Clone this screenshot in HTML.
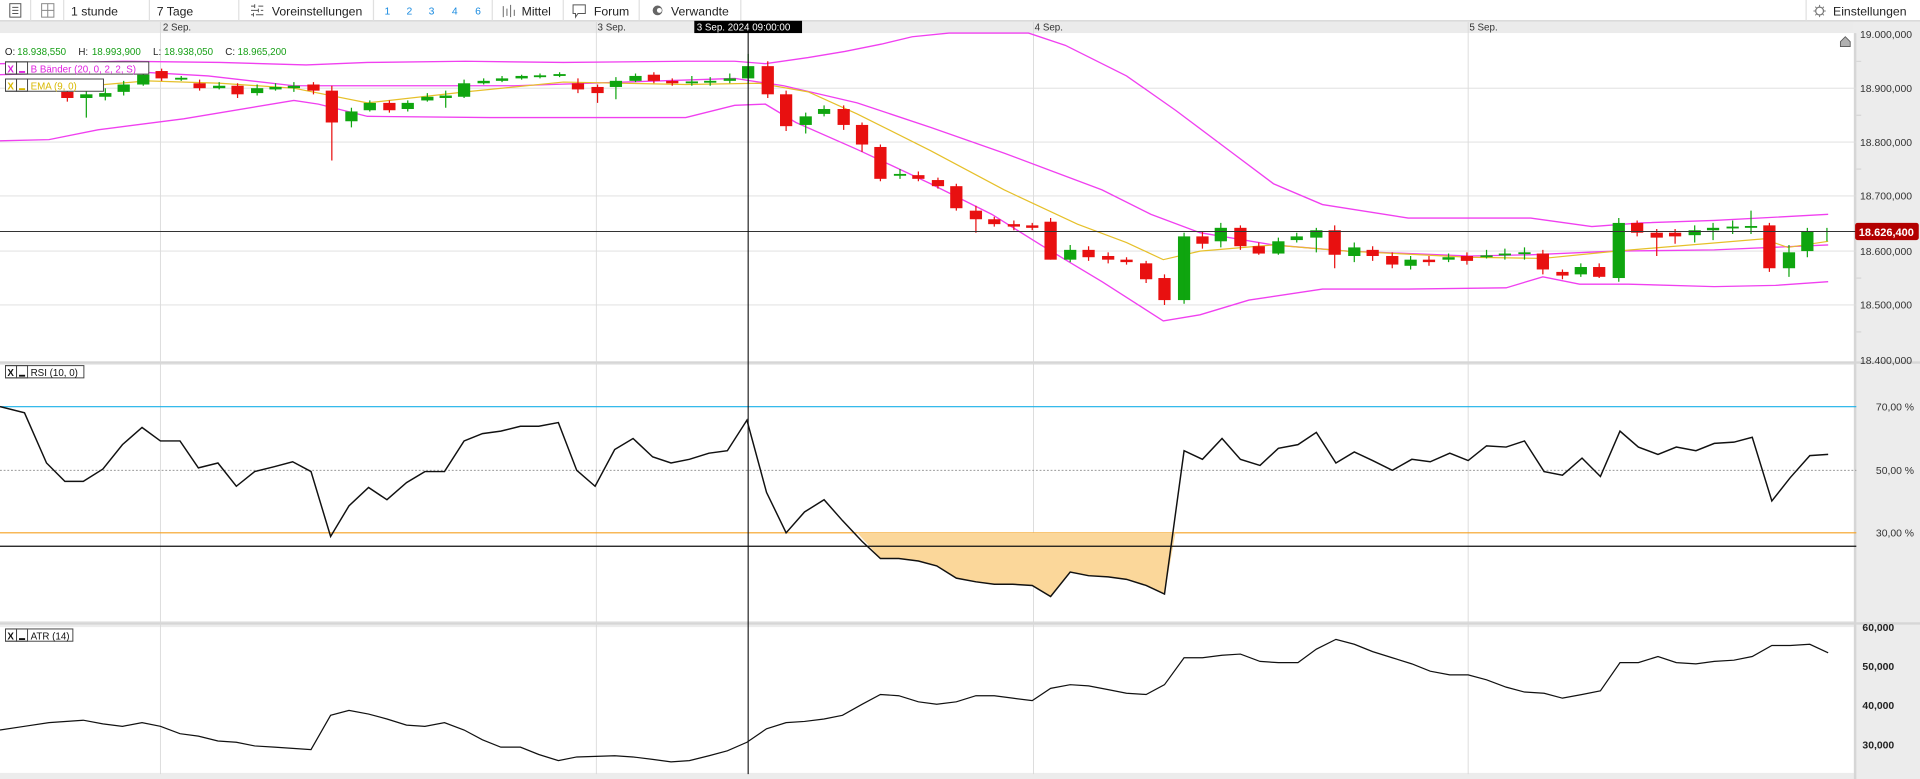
<!DOCTYPE html>
<html><head><meta charset="utf-8"><style>
html,body{margin:0;padding:0;background:#fff;}
svg{display:block}
text{font-family:"Liberation Sans",Arial,sans-serif;}
</style></head><body>
<svg width="1920" height="779" viewBox="0 0 1568 636" preserveAspectRatio="none" xmlns="http://www.w3.org/2000/svg">
<rect x="0" y="0" width="1568" height="636" fill="#ececec"/>
<rect x="0" y="0" width="1568" height="17" fill="#fff"/>
<line x1="0" y1="17" x2="1568" y2="17" stroke="#cfcfcf"/>
<rect x="0" y="18" width="1514" height="9" fill="#ebebeb"/>
<rect x="0" y="27" width="1514" height="268" fill="#fff"/>
<rect x="0" y="298" width="1514" height="209" fill="#fff"/>
<rect x="0" y="512" width="1514" height="119" fill="#fff"/>
<line x1="1515" y1="27" x2="1515" y2="636" stroke="#d6d6d6" stroke-width="2"/>
<line x1="0" y1="296" x2="1568" y2="296" stroke="#d6d6d6" stroke-width="2"/>
<line x1="0" y1="509" x2="1568" y2="509" stroke="#d6d6d6" stroke-width="2"/>

<g font-size="10" fill="#222">
<g stroke="#555" fill="none" stroke-width="0.8">
<rect x="8" y="3" width="9" height="11"/><path d="M10 6h5M10 8.5h5M10 11h5"/>
<rect x="34" y="3" width="10" height="11" stroke="#888"/><path d="M34 8.5h10M39 3v11" stroke="#888"/>
<path d="M205 5h3M211 5h4M205 8.5h6M213 8.5h2M205 12h2M209 12h6M208 3.5v3M211 7v3M207 10.5v3"/>
<path d="M411 5v9M414 7v6M417 4v10M420 8v5" stroke="#666"/>
<path d="M468 4h10v7h-6l-2 3v-3h-2z"/>
</g>
<circle cx="537" cy="8.5" r="4" fill="#666"/><circle cx="538.5" cy="8.5" r="2" fill="#fff"/>
<g stroke="#e0e0e0"><path d="M25 0v17M52 0v17M122 0v17M195 0v17M305 0v17M402 0v17M460 0v17M522 0v17M605 0v17M1475 0v17"/></g>
<text x="58" y="12.5">1 stunde</text>
<text x="128" y="12.5">7 Tage</text>
<text x="222" y="12.5">Voreinstellungen</text>
<g fill="#1a8be0" font-size="8.5"><text x="314" y="12">1</text><text x="332" y="12">2</text><text x="350" y="12">3</text><text x="369" y="12">4</text><text x="388" y="12">6</text></g>
<text x="426" y="12.5">Mittel</text>
<text x="485" y="12.5">Forum</text>
<text x="548" y="12.5">Verwandte</text>
<circle cx="1486" cy="9" r="3.2" fill="none" stroke="#777"/>
<path d="M1486 4v1.5M1486 12.5v1.5M1481 9h1.5M1489.5 9h1.5M1482.5 5.5l1 1M1488.5 11.5l1 1M1482.5 12.5l1-1M1488.5 6.5l1-1" stroke="#777" stroke-width="0.8"/>
<text x="1497" y="12.5">Einstellungen</text>
</g>

<g font-size="8" fill="#333">
<text x="133" y="25">2 Sep.</text><text x="488" y="25">3 Sep.</text><text x="845" y="25">4 Sep.</text><text x="1200" y="25">5 Sep.</text>
</g>
<g stroke="#d8d8d8" stroke-width="0.7"><path d="M131 18v614M487 18v614M844 18v614M1199 18v614"/></g>
<g stroke="#dcdcdc" stroke-width="0.7"><path d="M0 72h1516M0 116h1516M0 160h1516M0 205h1516M0 249h1516"/></g>
<g stroke="#ccc" stroke-width="0.7"><path d="M1516 50h4M1516 94h4M1516 138h4M1516 183h4M1516 227h4M1516 271h4"/></g>

<g font-size="8.5" fill="#333">
<text x="1519" y="31">19.000,000</text>
<text x="1519" y="75">18.900,000</text>
<text x="1519" y="119">18.800,000</text>
<text x="1519" y="163">18.700,000</text>
<text x="1519" y="208">18.600,000</text>
<text x="1519" y="252">18.500,000</text>
<text x="1519" y="297">18.400,000</text>
</g>
<path d="M1503 38v-4l4-4 4 4v4z" fill="#b0b0b0" stroke="#555" stroke-width="0.7"/>

<polyline fill="none" stroke="#f040f0" stroke-width="1.1" points="0,52 60,51 100,50 180,51 250,53 300,51 380,50 460,51 560,50 600,50 625,52 660,47 690,42 720,36 745,30 775,27 840,27 870,37 920,62 960,90 1000,120 1040,150 1080,167 1150,178 1250,178 1300,185 1340,182 1400,180 1493,175"/>
<polyline fill="none" stroke="#f040f0" stroke-width="1.1" points="0,61 100,58 170,62 240,70 420,70 600,64 640,70 700,84 760,104 820,125 860,140 900,155 940,175 980,190 1040,200 1100,205 1200,209 1250,208 1320,205 1400,204 1493,200"/>
<polyline fill="none" stroke="#f040f0" stroke-width="1.1" points="0,115 40,114 80,106 150,97 240,82 260,85 300,95 400,96 560,96 600,86 625,85 650,100 700,122 760,150 810,175 850,200 900,230 950,262 980,257 1020,245 1080,236 1150,236 1230,235 1260,226 1290,232 1330,232 1400,234 1450,233 1493,230"/>
<polyline fill="none" stroke="#e6c02a" stroke-width="1" points="40,73 120,66 180,68 240,72 300,84 380,75 460,67 560,69 620,68 660,75 700,93 760,123 820,155 880,183 920,198 950,212 980,205 1040,200 1100,205 1200,210 1260,211 1320,205 1440,195 1460,202 1493,197"/>

<g stroke="#0fa50f" stroke-width="1">
<path d="M70.5 70v26M86 72v10M101 66v12M117 58v12M148 62v4M179 67v6M210 69v9M225 68v6M240 67v8M287 88v16M302 82v9M333 82v9M349 76v7M364 74v14M379 65v15M395 64v5M410 62v5M426 61v4M441 60v4M457 59v4M503 63v18M519 60v7M565 62v8M580 63v7M596 60v8M611 44v24M658 92v17M673 86v9M735 138v8M874 200v14M997 182v20M1044 194v14M1059 190v8M1075 186v20M1106 198v16M1152 209v11M1183 207v7M1214 204v7M1229 203v9M1245 202v10M1291 215v11M1322 178v52M1384 184v14M1399 182v14M1415 180v11M1430 172v19M1461 200v26M1476 186v24M1492 186v11"/>
</g>
<g fill="#0fa50f">
<rect x="65.5" y="77" width="10" height="3"/><rect x="81" y="76" width="10" height="3"/><rect x="96" y="69" width="10" height="6"/><rect x="112" y="61" width="10" height="8"/><rect x="143" y="63.5" width="10" height="1.5"/><rect x="174" y="70" width="10" height="2"/><rect x="205" y="72" width="10" height="4"/><rect x="220" y="71" width="10" height="2"/><rect x="235" y="70" width="10" height="2"/><rect x="282" y="91" width="10" height="8"/><rect x="297" y="84" width="10" height="6"/><rect x="328" y="84" width="10" height="5"/><rect x="344" y="79" width="10" height="3"/><rect x="359" y="78" width="10" height="2"/><rect x="374" y="68" width="10" height="11"/><rect x="390" y="66" width="10" height="2"/><rect x="405" y="64" width="10" height="2"/><rect x="421" y="62" width="10" height="2"/><rect x="436" y="61.5" width="10" height="1.5"/><rect x="452" y="60.5" width="10" height="1.5"/><rect x="498" y="66" width="10" height="5"/><rect x="514" y="62" width="10" height="4"/><rect x="560" y="66.5" width="10" height="1.5"/><rect x="575" y="66" width="10" height="1.5"/><rect x="591" y="64" width="10" height="2"/><rect x="606" y="54" width="10" height="10"/><rect x="653" y="95" width="10" height="7"/><rect x="668" y="89" width="10" height="4"/><rect x="730" y="142" width="10" height="1.5"/><rect x="869" y="204" width="10" height="8"/><rect x="962" y="193" width="10" height="52"/><rect x="992" y="186" width="10" height="11"/><rect x="1039" y="197" width="10" height="10"/><rect x="1054" y="193" width="10" height="3"/><rect x="1070" y="188" width="10" height="6"/><rect x="1101" y="202" width="10" height="7"/><rect x="1147" y="212" width="10" height="5"/><rect x="1178" y="210" width="10" height="2"/><rect x="1209" y="208.5" width="10" height="1.5"/><rect x="1224" y="207" width="10" height="1.5"/><rect x="1240" y="206" width="10" height="1.5"/><rect x="1286" y="218" width="10" height="6"/><rect x="1317" y="182" width="10" height="45"/><rect x="1379" y="188" width="10" height="4"/><rect x="1394" y="186" width="10" height="2"/><rect x="1410" y="185" width="10" height="1.5"/><rect x="1425" y="184.5" width="10" height="1.5"/><rect x="1456" y="206" width="10" height="13"/><rect x="1471" y="189" width="10" height="16"/>
</g>
<path d="M967 190v58" stroke="#0fa50f"/>
<g stroke="#e81010" stroke-width="1">
<path d="M55 72v11M132 56v10M163 65v9M194 68v12M256 67v10M271 70v61M318 82v10M472 64v12M488 69v15M534 59v9M549 64v6M627 50v30M642 74v33M689 86v20M704 100v24M719 118v30M750 140v8M766 145v9M781 150v22M797 168v22M812 177v8M828 180v8M843 182v6M858 178v34M889 201v12M905 206v9M920 210v6M936 213v18M951 224v25M982 189v14M1013 184v20M1028 198v10M1090 184v35M1121 201v12M1137 206v13M1167 209v8M1198 206v10M1260 204v20M1276 220v8M1306 215v12M1337 180v13M1353 187v22M1368 187v12M1445 182v40"/>
</g>
<g fill="#e81010">
<rect x="50" y="75" width="10" height="5"/><rect x="127" y="58" width="10" height="6"/><rect x="158" y="68" width="10" height="4"/><rect x="189" y="70" width="10" height="7"/><rect x="251" y="69" width="10" height="5"/><rect x="266" y="74" width="10" height="26"/><rect x="313" y="84" width="10" height="6"/><rect x="467" y="68" width="10" height="5"/><rect x="483" y="71" width="10" height="5"/><rect x="529" y="61" width="10" height="5"/><rect x="544" y="66" width="10" height="2"/><rect x="622" y="54" width="10" height="23"/><rect x="637" y="77" width="10" height="26"/><rect x="684" y="89" width="10" height="13"/><rect x="699" y="102" width="10" height="16"/><rect x="714" y="120" width="10" height="26"/><rect x="745" y="143" width="10" height="3"/><rect x="761" y="147" width="10" height="5"/><rect x="776" y="152" width="10" height="18"/><rect x="792" y="172" width="10" height="7"/><rect x="807" y="179" width="10" height="4"/><rect x="823" y="183" width="10" height="2"/><rect x="838" y="184" width="10" height="2"/><rect x="853" y="181" width="10" height="31"/><rect x="884" y="204" width="10" height="6"/><rect x="900" y="209" width="10" height="3"/><rect x="915" y="212" width="10" height="2"/><rect x="931" y="215" width="10" height="13"/><rect x="946" y="227" width="10" height="18"/><rect x="977" y="193" width="10" height="6"/><rect x="1008" y="186" width="10" height="15"/><rect x="1023" y="201" width="10" height="6"/><rect x="1085" y="188" width="10" height="20"/><rect x="1116" y="204" width="10" height="5"/><rect x="1132" y="209" width="10" height="7"/><rect x="1162" y="212" width="10" height="2"/><rect x="1193" y="209" width="10" height="4"/><rect x="1255" y="207" width="10" height="13"/><rect x="1271" y="222" width="10" height="3"/><rect x="1301" y="218" width="10" height="8"/><rect x="1332" y="182" width="10" height="8"/><rect x="1348" y="190" width="10" height="4"/><rect x="1363" y="190" width="10" height="3"/><rect x="1440" y="184" width="10" height="35"/>
</g>

<line x1="0" y1="189" x2="1516" y2="189" stroke="#333" stroke-width="0.8"/>
<rect x="1515" y="182" width="52" height="14" rx="2" fill="#b30000"/>
<text x="1518" y="192.5" font-size="9" font-weight="bold" fill="#fff">18.626,400</text>

<g font-size="8">
<text x="4" y="45" fill="#222">O:</text><text x="14" y="45" fill="#18a018">18.938,550</text>
<text x="64" y="45" fill="#222">H:</text><text x="75" y="45" fill="#18a018">18.993,900</text>
<text x="125" y="45" fill="#222">L:</text><text x="134" y="45" fill="#18a018">18.938,050</text>
<text x="184" y="45" fill="#222">C:</text><text x="194" y="45" fill="#18a018">18.965,200</text>
</g>
<g font-size="8">
<rect x="4.5" y="50.5" width="117" height="10" fill="#fff" stroke="#444" stroke-width="0.8"/>
<rect x="4.5" y="50.5" width="9" height="10" fill="none" stroke="#444" stroke-width="0.8"/><rect x="13.5" y="50.5" width="9" height="10" fill="none" stroke="#444" stroke-width="0.8"/>
<text x="6" y="59" fill="#e020e0" font-weight="bold">X</text><rect x="15.5" y="58" width="5" height="1.5" fill="#e020e0"/>
<text x="25" y="59" fill="#e020e0">B Bänder (20, 0, 2, 2, S)</text>
<rect x="4.5" y="64.5" width="80" height="10" fill="#fff" stroke="#444" stroke-width="0.8"/>
<rect x="4.5" y="64.5" width="9" height="10" fill="none" stroke="#444" stroke-width="0.8"/><rect x="13.5" y="64.5" width="9" height="10" fill="none" stroke="#444" stroke-width="0.8"/>
<text x="6" y="73" fill="#d8b800" font-weight="bold">X</text><rect x="15.5" y="72" width="5" height="1.5" fill="#d8b800"/>
<text x="25" y="73" fill="#d8b800">EMA (9, 0)</text>
</g>

<line x1="0" y1="332" x2="1516" y2="332" stroke="#1ab0e8" stroke-width="0.9"/>
<line x1="0" y1="384" x2="1516" y2="384" stroke="#888" stroke-width="0.7" stroke-dasharray="1.5,1.5"/>
<line x1="0" y1="435" x2="1516" y2="435" stroke="#f5a020" stroke-width="0.9"/>
<polygon fill="#fbd79a" points="700,435 719,456 734,456 750,458 765,462 781,472 797,475 812,477 827,477 843,478 858,487 874,467 889,470 905,471 920,473 936,478 951,485 960,435"/>
<line x1="0" y1="446" x2="1516" y2="446" stroke="#111" stroke-width="1"/>
<polyline fill="none" stroke="#111" stroke-width="1.2" points="0,332 20,337 38,378 53,393 68,393 84,383 100,363 116,349 131,360 147,360 162,382 178,378 193,397 208,385 224,381 239,377 254,385 270,438 285,413 301,398 316,408 332,394 347,385 363,385 379,360 394,354 409,352 425,348 440,348 456,345 471,384 486,397 502,367 517,358 533,373 548,378 563,375 579,370 594,368 610,343 626,402 642,435 657,418 673,408 688,425 704,442 719,456 734,456 750,458 765,462 781,472 797,475 812,477 827,477 843,478 858,487 874,467 889,470 905,471 920,473 936,478 951,485 967,368 982,375 998,358 1013,375 1029,380 1044,366 1060,363 1075,353 1091,378 1106,369 1121,376 1137,384 1153,375 1168,377 1184,370 1199,376 1214,364 1230,365 1245,360 1261,385 1276,388 1292,374 1307,389 1323,352 1338,365 1354,371 1369,365 1385,368 1400,362 1416,361 1431,357 1447,409 1462,390 1478,372 1493,371"/>
<g font-size="8.5" fill="#333">
<text x="1532" y="335">70,00 %</text><text x="1532" y="387">50,00 %</text><text x="1532" y="438">30,00 %</text>
</g>
<g font-size="8">
<rect x="4.5" y="298.5" width="64" height="10" fill="#fff" stroke="#444" stroke-width="0.8"/>
<rect x="4.5" y="298.5" width="9" height="10" fill="none" stroke="#444" stroke-width="0.8"/><rect x="13.5" y="298.5" width="9" height="10" fill="none" stroke="#444" stroke-width="0.8"/>
<text x="6" y="307" fill="#111" font-weight="bold">X</text><rect x="15.5" y="306" width="5" height="1.5" fill="#111"/>
<text x="25" y="307" fill="#111">RSI (10, 0)</text>
</g>

<polyline fill="none" stroke="#111" stroke-width="1" points="0,596 20,593 40,590 68,588 84,591 100,593 116,590 131,593 147,599 162,601 178,605 193,606 208,609 224,610 254,612 270,584 285,580 301,583 316,587 332,592 347,593 363,590 379,596 394,604 409,610 425,610 440,616 456,621 471,618 502,617 517,618 533,620 548,622 563,621 579,617 594,613 610,606 626,595 642,590 657,589 673,587 688,584 704,575 719,567 734,568 750,573 765,575 781,573 797,568 812,568 827,570 843,572 858,562 874,559 889,560 905,563 920,566 936,567 951,559 967,537 982,537 998,535 1013,534 1029,540 1044,541 1060,541 1075,530 1091,522 1106,526 1121,532 1137,537 1153,542 1168,548 1184,551 1199,551 1214,555 1230,561 1245,565 1261,566 1276,570 1292,567 1307,564 1323,541 1338,541 1354,536 1369,541 1385,542 1400,540 1416,539 1431,536 1447,527 1462,527 1478,526 1493,533"/>
<g font-size="8.5" fill="#222" font-weight="bold">
<text x="1521" y="515">60,000</text><text x="1521" y="547">50,000</text><text x="1521" y="579">40,000</text><text x="1521" y="611">30,000</text>
</g>
<g font-size="8">
<rect x="4.5" y="513.5" width="55" height="10" fill="#fff" stroke="#444" stroke-width="0.8"/>
<rect x="4.5" y="513.5" width="9" height="10" fill="none" stroke="#444" stroke-width="0.8"/><rect x="13.5" y="513.5" width="9" height="10" fill="none" stroke="#444" stroke-width="0.8"/>
<text x="6" y="522" fill="#111" font-weight="bold">X</text><rect x="15.5" y="521" width="5" height="1.5" fill="#111"/>
<text x="25" y="522" fill="#111">ATR (14)</text>
</g>

<line x1="611" y1="18" x2="611" y2="632" stroke="#111" stroke-width="0.9"/>
<rect x="567" y="17" width="88" height="10" fill="#000"/>
<text x="569" y="25" font-size="8" fill="#fff">3 Sep. 2024 09:00:00</text>
</svg>
</body></html>
